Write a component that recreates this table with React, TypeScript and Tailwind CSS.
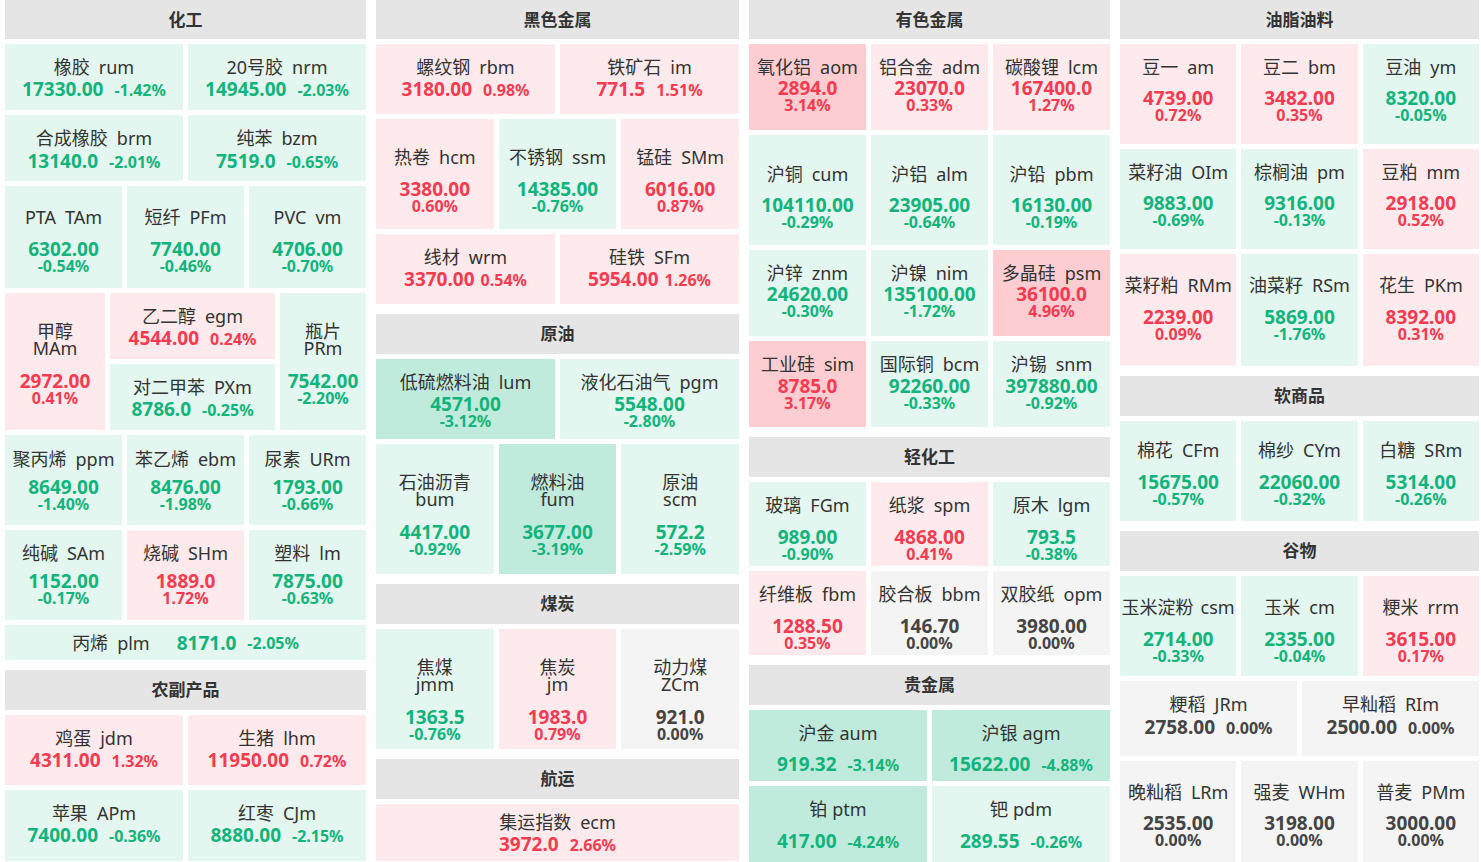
import React from 'react';

// ─── Types ────────────────────────────────────────────────────────────────

type Kind = 'A' | 'B' | 'C' | 'D';

interface Tile {
  cn: string;
  code: string;
  price: string;
  pct: string;
  kind?: Kind;
  pt?: string;
  mt?: string;
  sp?: string;
  pg?: string;
}

interface Row {
  h: string;
  cols: string;
  kind: Kind;
  pt?: string;
  mt?: string;
  sp?: string;
  cells: (Tile | Tile[])[];
}

interface Section {
  title: string;
  hh: string;
  rows: Row[];
}

const t = (cn: string, code: string, price: string, pct: string, extra: Partial<Tile> = {}): Tile => ({
  cn,
  code,
  price,
  pct,
  ...extra,
});

// ─── Data ─────────────────────────────────────────────────────────────────

const columns: Section[][] = [
  [
    {
      title: '化工',
      hh: 'h-[39px]',
      rows: [
        { h: 'h-[66px]', cols: 'grid-cols-2', kind: 'A', pt: 'pt-[12px]', cells: [t('橡胶', 'rum', '17330.00', '-1.42%'), t('20号胶', 'nrm', '14945.00', '-2.03%')] },
        { h: 'h-[66px]', cols: 'grid-cols-2', kind: 'A', pt: 'pt-[12px]', mt: 'mt-[1px]', cells: [t('合成橡胶', 'brm', '13140.0', '-2.01%'), t('纯苯', 'bzm', '7519.0', '-0.65%')] },
        {
          h: 'h-[102px]', cols: 'grid-cols-3', kind: 'B', pt: 'pt-[20px]', mt: 'mt-[12px]',
          cells: [t('PTA', 'TAm', '6302.00', '-0.54%'), t('短纤', 'PFm', '7740.00', '-0.46%'), t('PVC', 'vm', '4706.00', '-0.70%')],
        },
        {
          h: 'h-[137px]', cols: 'grid-cols-[100px_1fr_86px]', kind: 'C', pt: 'pt-[30px]',
          cells: [
            t('甲醇', 'MAm', '2972.00', '0.41%'),
            [
              t('乙二醇', 'egm', '4544.00', '0.24%', { kind: 'A', pt: 'pt-[12px]', mt: 'mt-0' }),
              t('对二甲苯', 'PXm', '8786.0', '-0.25%', { kind: 'A', pt: 'pt-[12px]', mt: 'mt-0' }),
            ],
            t('瓶片', 'PRm', '7542.00', '-2.20%'),
          ],
        },
        {
          h: 'h-[90px]', cols: 'grid-cols-3', kind: 'B', pt: 'pt-[13px]', mt: 'mt-[8px]',
          cells: [t('聚丙烯', 'ppm', '8649.00', '-1.40%'), t('苯乙烯', 'ebm', '8476.00', '-1.98%'), t('尿素', 'URm', '1793.00', '-0.66%')],
        },
        {
          h: 'h-[90px]', cols: 'grid-cols-3', kind: 'B', pt: 'pt-[12px]', mt: 'mt-[8px]',
          cells: [t('纯碱', 'SAm', '1152.00', '-0.17%'), t('烧碱', 'SHm', '1889.0', '1.72%'), t('塑料', 'lm', '7875.00', '-0.63%')],
        },
        { h: 'h-[35px]', cols: 'grid-cols-1', kind: 'D', cells: [t('丙烯', 'plm', '8171.0', '-2.05%')] },
      ],
    },
    {
      title: '农副产品',
      hh: 'h-10',
      rows: [
        { h: 'h-[70px]', cols: 'grid-cols-2', kind: 'A', pt: 'pt-[12px]', cells: [t('鸡蛋', 'jdm', '4311.00', '1.32%'), t('生猪', 'lhm', '11950.00', '0.72%')] },
        { h: 'h-[71px]', cols: 'grid-cols-2', kind: 'A', pt: 'pt-[12px]', cells: [t('苹果', 'APm', '7400.00', '-0.36%'), t('红枣', 'CJm', '8880.00', '-2.15%')] },
      ],
    },
  ],
  [
    {
      title: '黑色金属',
      hh: 'h-[39px]',
      rows: [
        { h: 'h-[70px]', cols: 'grid-cols-2', kind: 'A', pt: 'pt-[12px]', cells: [t('螺纹钢', 'rbm', '3180.00', '0.98%'), t('铁矿石', 'im', '771.5', '1.51%')] },
        {
          h: 'h-[110px]', cols: 'grid-cols-3', kind: 'B', pt: 'pt-[27px]', mt: 'mt-[12px]',
          cells: [t('热卷', 'hcm', '3380.00', '0.60%'), t('不锈钢', 'ssm', '14385.00', '-0.76%'), t('锰硅', 'SMm', '6016.00', '0.87%')],
        },
        {
          h: 'h-[70px]', cols: 'grid-cols-2', kind: 'A', pt: 'pt-[12px]',
          cells: [t('线材', 'wrm', '3370.00', '0.54%', { pg: 'ml-[6px]' }), t('硅铁', 'SFm', '5954.00', '1.26%', { pg: 'ml-[6px]' })],
        },
      ],
    },
    {
      title: '原油',
      hh: 'h-10',
      rows: [
        { h: 'h-[80px]', cols: 'grid-cols-2', kind: 'B', pt: 'pt-[12px]', mt: 'mt-[2px]', cells: [t('低硫燃料油', 'lum', '4571.00', '-3.12%'), t('液化石油气', 'pgm', '5548.00', '-2.80%')] },
        {
          h: 'h-[130px]', cols: 'grid-cols-3', kind: 'C', pt: 'pt-[30px]',
          cells: [t('石油沥青', 'bum', '4417.00', '-0.92%'), t('燃料油', 'fum', '3677.00', '-3.19%'), t('原油', 'scm', '572.2', '-2.59%')],
        },
      ],
    },
    {
      title: '煤炭',
      hh: 'h-10',
      rows: [
        {
          h: 'h-[120px]', cols: 'grid-cols-3', kind: 'C', pt: 'pt-[30px]',
          cells: [t('焦煤', 'jmm', '1363.5', '-0.76%'), t('焦炭', 'jm', '1983.0', '0.79%'), t('动力煤', 'ZCm', '921.0', '0.00%')],
        },
      ],
    },
    {
      title: '航运',
      hh: 'h-10',
      rows: [{ h: 'h-[57px]', cols: 'grid-cols-1', kind: 'A', pt: 'pt-[7px]', cells: [t('集运指数', 'ecm', '3972.0', '2.66%')] }],
    },
  ],
  [
    {
      title: '有色金属',
      hh: 'h-[39px]',
      rows: [
        {
          h: 'h-[86px]', cols: 'grid-cols-3', kind: 'B', pt: 'pt-[12px]', mt: 'mt-[1px]',
          cells: [t('氧化铝', 'aom', '2894.0', '3.14%'), t('铝合金', 'adm', '23070.0', '0.33%'), t('碳酸锂', 'lcm', '167400.0', '1.27%')],
        },
        {
          h: 'h-[110px]', cols: 'grid-cols-3', kind: 'B', pt: 'pt-[28px]', mt: 'mt-[11px]',
          cells: [t('沪铜', 'cum', '104110.00', '-0.29%'), t('沪铝', 'alm', '23905.00', '-0.64%'), t('沪铅', 'pbm', '16130.00', '-0.19%')],
        },
        {
          h: 'h-[86px]', cols: 'grid-cols-3', kind: 'B', pt: 'pt-[12px]', mt: 'mt-[1px]',
          cells: [t('沪锌', 'znm', '24620.00', '-0.30%'), t('沪镍', 'nim', '135100.00', '-1.72%'), t('多晶硅', 'psm', '36100.0', '4.96%')],
        },
        {
          h: 'h-[86px]', cols: 'grid-cols-3', kind: 'B', pt: 'pt-[12px]', mt: 'mt-[2px]',
          cells: [t('工业硅', 'sim', '8785.0', '3.17%'), t('国际铜', 'bcm', '92260.00', '-0.33%'), t('沪锡', 'snm', '397880.00', '-0.92%')],
        },
      ],
    },
    {
      title: '轻化工',
      hh: 'h-10',
      rows: [
        {
          h: 'h-[84px]', cols: 'grid-cols-3', kind: 'B', pt: 'pt-[12px]', mt: 'mt-[12px]',
          cells: [t('玻璃', 'FGm', '989.00', '-0.90%'), t('纸浆', 'spm', '4868.00', '0.41%'), t('原木', 'lgm', '793.5', '-0.38%')],
        },
        {
          h: 'h-[84px]', cols: 'grid-cols-3', kind: 'B', pt: 'pt-[12px]', mt: 'mt-[12px]',
          cells: [t('纤维板', 'fbm', '1288.50', '0.35%'), t('胶合板', 'bbm', '146.70', '0.00%'), t('双胶纸', 'opm', '3980.00', '0.00%')],
        },
      ],
    },
    {
      title: '贵金属',
      hh: 'h-10',
      rows: [
        { h: 'h-[71px]', cols: 'grid-cols-2', kind: 'A', pt: 'pt-[12px]', mt: 'mt-[9px]', sp: 'ml-[5px]', cells: [t('沪金', 'aum', '919.32', '-3.14%'), t('沪银', 'agm', '15622.00', '-4.88%')] },
        { h: 'h-[76px]', cols: 'grid-cols-2', kind: 'A', pt: 'pt-[12px]', mt: 'mt-[10px]', sp: 'ml-[5px]', cells: [t('铂', 'ptm', '417.00', '-4.24%'), t('钯', 'pdm', '289.55', '-0.26%')] },
      ],
    },
  ],
  [
    {
      title: '油脂油料',
      hh: 'h-[39px]',
      rows: [
        {
          h: 'h-[100px]', cols: 'grid-cols-3', kind: 'B', pt: 'pt-[12px]', mt: 'mt-[11px]',
          cells: [t('豆一', 'am', '4739.00', '0.72%'), t('豆二', 'bm', '3482.00', '0.35%'), t('豆油', 'ym', '8320.00', '-0.05%')],
        },
        {
          h: 'h-[100px]', cols: 'grid-cols-3', kind: 'B', pt: 'pt-[12px]', mt: 'mt-[11px]',
          cells: [t('菜籽油', 'OIm', '9883.00', '-0.69%'), t('棕榈油', 'pm', '9316.00', '-0.13%'), t('豆粕', 'mm', '2918.00', '0.52%')],
        },
        {
          h: 'h-[112px]', cols: 'grid-cols-3', kind: 'B', pt: 'pt-[20px]', mt: 'mt-[12px]',
          cells: [t('菜籽粕', 'RMm', '2239.00', '0.09%'), t('油菜籽', 'RSm', '5869.00', '-1.76%'), t('花生', 'PKm', '8392.00', '0.31%')],
        },
      ],
    },
    {
      title: '软商品',
      hh: 'h-10',
      rows: [
        {
          h: 'h-[100px]', cols: 'grid-cols-3', kind: 'B', pt: 'pt-[18px]', mt: 'mt-[12px]',
          cells: [t('棉花', 'CFm', '15675.00', '-0.57%'), t('棉纱', 'CYm', '22060.00', '-0.32%'), t('白糖', 'SRm', '5314.00', '-0.26%')],
        },
      ],
    },
    {
      title: '谷物',
      hh: 'h-10',
      rows: [
        {
          h: 'h-[100px]', cols: 'grid-cols-3', kind: 'B', pt: 'pt-[20px]', mt: 'mt-[12px]',
          cells: [t('玉米淀粉', 'csm', '2714.00', '-0.33%', { sp: 'ml-[7px]' }), t('玉米', 'cm', '2335.00', '-0.04%'), t('粳米', 'rrm', '3615.00', '0.17%')],
        },
        { h: 'h-[75px]', cols: 'grid-cols-2', kind: 'A', pt: 'pt-[12px]', mt: 'mt-[1px]', cells: [t('粳稻', 'JRm', '2758.00', '0.00%'), t('早籼稻', 'RIm', '2500.00', '0.00%')] },
        {
          h: 'h-[101px]', cols: 'grid-cols-3', kind: 'B', pt: 'pt-[20px]', mt: 'mt-[11px]',
          cells: [t('晚籼稻', 'LRm', '2535.00', '0.00%'), t('强麦', 'WHm', '3198.00', '0.00%'), t('普麦', 'PMm', '3000.00', '0.00%')],
        },
      ],
    },
  ],
];

// ─── Tiles ────────────────────────────────────────────────────────────────

function tone(pct: string) {
  const v = parseFloat(pct);
  if (v === 0) return { bg: 'bg-[#f4f4f4]', fg: 'text-[#444444]' };
  if (v > 0) return { bg: v >= 3 ? 'bg-[#fdcdd1]' : 'bg-[#feeaec]', fg: 'text-[#f43b51]' };
  return { bg: v <= -3 ? 'bg-[#c0ebdc]' : 'bg-[#e3f6ef]', fg: 'text-[#13b47c]' };
}

function TileBox({ tile }: { tile: Tile }) {
  const c = tone(tile.pct);
  const sp = tile.sp ?? 'ml-[9px]';

  if (tile.kind === 'D') {
    return (
      <div className={`flex h-full items-center justify-center whitespace-nowrap ${c.bg}`}>
        <span className="text-[18px] leading-[22px] text-[#333]">
          {tile.cn}
          <span className={sp}>{tile.code}</span>
        </span>
        <span className={`ml-[27px] text-[19px] font-bold leading-[22px] ${c.fg}`}>{tile.price}</span>
        <span className={`ml-[11px] text-[16px] font-bold leading-[22px] ${c.fg}`}>{tile.pct}</span>
      </div>
    );
  }

  return (
    <div className={`flex h-full min-w-0 flex-col items-center overflow-hidden whitespace-nowrap ${c.bg} ${tile.pt ?? ''}`}>
      {tile.kind === 'C' ? (
        <div className="flex flex-col items-center text-[18px] leading-[17px] text-[#333]">
          <span>{tile.cn}</span>
          <span>{tile.code}</span>
        </div>
      ) : (
        <div className="text-[18px] leading-[22px] text-[#333]">
          {tile.cn}
          <span className={sp}>{tile.code}</span>
        </div>
      )}
      {tile.kind === 'A' ? (
        <div className={`flex items-baseline font-bold leading-[22px] ${c.fg} ${tile.mt ?? 'mt-0'}`}>
          <span className="text-[19px]">{tile.price}</span>
          <span className={`text-[16px] ${tile.pg ?? 'ml-[11px]'}`}>{tile.pct}</span>
        </div>
      ) : (
        <div className={`flex flex-col items-center font-bold ${c.fg} ${tile.mt ?? 'mt-[15px]'}`}>
          <span className="text-[19px] leading-[18px]">{tile.price}</span>
          <span className="text-[16px] leading-[17px]">{tile.pct}</span>
        </div>
      )}
    </div>
  );
}

function RowView({ row }: { row: Row }) {
  const inherit = (tile: Tile): Tile => ({
    ...tile,
    kind: tile.kind ?? row.kind,
    pt: tile.pt ?? row.pt,
    mt: tile.mt ?? row.mt,
    sp: tile.sp ?? row.sp,
  });

  return (
    <div className={`grid gap-[5px] ${row.h} ${row.cols}`}>
      {row.cells.map((cell, i) =>
        Array.isArray(cell) ? (
          <div key={i} className="flex min-w-0 flex-col gap-[5px]">
            {cell.map((tile) => (
              <div key={tile.code} className="flex-1">
                <TileBox tile={inherit(tile)} />
              </div>
            ))}
          </div>
        ) : (
          <TileBox key={cell.code} tile={inherit(cell)} />
        ),
      )}
    </div>
  );
}

function SectionView({ section }: { section: Section }) {
  return (
    <div className="flex flex-col gap-[5px]">
      <div className={`flex items-center justify-center bg-[#e5e5e5] text-[17px] font-bold text-[#333] ${section.hh}`}>
        {section.title}
      </div>
      {section.rows.map((row, i) => (
        <RowView key={i} row={row} />
      ))}
    </div>
  );
}

export default function App() {
  return (
    <div className="h-[862px] w-[1481px] overflow-hidden bg-white font-['Noto_Sans','Noto_Sans_CJK_SC',sans-serif]">
      <div className="grid grid-cols-[361px_363px_361px_359px] items-start gap-x-[10px] pl-[5px]">
        {columns.map((sections, i) => (
          <div key={i} className="flex flex-col gap-[10px]">
            {sections.map((s) => (
              <SectionView key={s.title} section={s} />
            ))}
          </div>
        ))}
      </div>
    </div>
  );
}
